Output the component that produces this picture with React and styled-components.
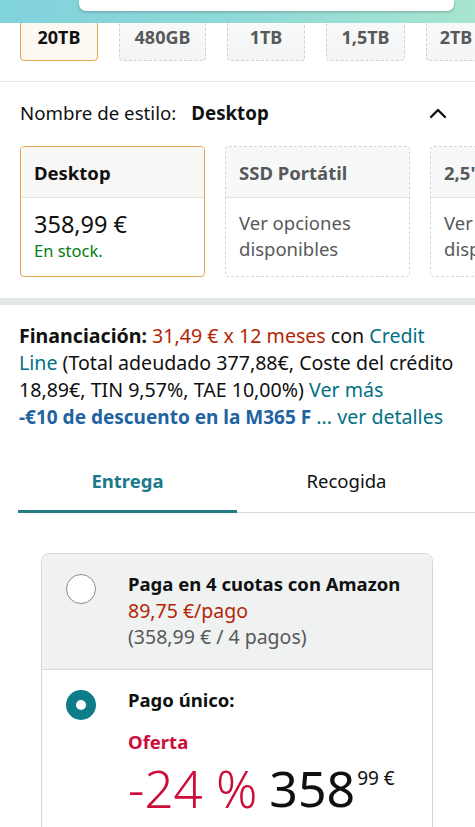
import React from "react";
import styled, { createGlobalStyle } from "styled-components";

const GlobalStyle = createGlobalStyle`
  html, body { margin: 0; padding: 0; background: #fff; }
  body {
    font-family: "Noto Sans", "Open Sans", sans-serif;
    color: #0f1111;
    width: 475px;
    overflow: hidden;
    -webkit-font-smoothing: antialiased;
  }
  * { box-sizing: border-box; }
`;

const Header = styled.header`
  position: fixed;
  top: 0;
  left: 0;
  right: 0;
  height: 23px;
  z-index: 10;
  display: flex;
  align-items: flex-start;
  padding: 0 21px 0 79px;
  background: linear-gradient(90deg, #80d2dc 0%, #8fd9d8 50%, #a7e5d0 100%);
`;

const SearchBox = styled.div`
  flex: 1;
  height: 11px;
  background: #fff;
  border-radius: 0 0 7px 7px;
  box-shadow: 0 1px 3px rgba(0, 0, 0, 0.25);
`;

const Page = styled.main`
  display: flex;
  flex-direction: column;
`;

const ChipRow = styled.div`
  display: flex;
  gap: 21px;
  padding: 13px 0 0 20px;
  overflow: hidden;
  white-space: nowrap;
`;

const Chip = styled.div`
  flex: 0 0 ${(p) => p.$w}px;
  height: 48px;
  display: flex;
  align-items: center;
  justify-content: center;
  font-size: 18px;
  font-weight: 700;
  border-radius: 4px;
  color: ${(p) => (p.$selected ? "#0f1111" : "#565959")};
  background: ${(p) =>
    p.$selected ? "#fef8f2" : "linear-gradient(180deg, #f9fafa 0%, #f3f4f5 100%)"};
  border: ${(p) => (p.$selected ? "1.5px solid #e5a556" : "1px dashed #cfd2d4")};
`;

const Divider = styled.div`
  height: 1px;
  background: #e7e9ea;
  margin-top: 20px;
`;

const StyleHeader = styled.div`
  display: flex;
  align-items: center;
  justify-content: space-between;
  padding: 19px 28px 0 20px;
  height: 42px;
  font-size: 18.7px;
  line-height: 22px;
`;

const StyleLabel = styled.div`
  color: #0f1111;
  b { font-weight: 700; margin-left: 15px; }
`;

const CardRow = styled.div`
  display: flex;
  gap: 20px;
  padding: 22px 0 0 20px;
  overflow: hidden;
`;

const StyleCard = styled.div`
  flex: 0 0 185px;
  height: 131px;
  border-radius: 4px;
  overflow: hidden;
  display: flex;
  flex-direction: column;
  border: ${(p) => (p.$selected ? "1.5px solid #e5a556" : "1px dashed #d3d5d7")};
`;

const CardTitle = styled.div`
  height: 51px;
  display: flex;
  align-items: center;
  padding-left: 13px;
  font-size: 18.5px;
  font-weight: 700;
  white-space: nowrap;
  color: ${(p) => (p.$selected ? "#0f1111" : "#565959")};
  background: ${(p) => (p.$selected ? "#f9f7f5" : "#f7f8f8")};
  border-bottom: 1px solid #e3e3e3;
`;

const CardBody = styled.div`
  flex: 1;
  padding: 12px 13px 0 13px;
  display: flex;
  flex-direction: column;
  white-space: nowrap;
`;

const CardPrice = styled.div`
  font-size: 23.5px;
  line-height: 28px;
  color: #0f1111;
`;

const Stock = styled.div`
  font-size: 16.5px;
  line-height: 26px;
  color: #067d0f;
`;

const Muted = styled.div`
  font-size: 18.5px;
  line-height: 26px;
  color: #565959;
`;

const Band = styled.div`
  height: 7px;
  background: #e3e6e6;
  margin-top: 21px;
`;

const Financing = styled.div`
  display: flex;
  flex-direction: column;
  padding: 17px 0 0 19px;
  font-size: 19.6px;
  line-height: 27px;
  color: #0f1111;
`;

const FinLine = styled.div`
  white-space: nowrap;
`;

const Bold = styled.span`
  font-weight: 700;
`;

const Price = styled.span`
  color: #b12704;
`;

const Link = styled.span`
  color: #007185;
`;

const Promo = styled.span`
  color: #2162a1;
  font-weight: 700;
  font-size: 19px;
`;

const Tabs = styled.div`
  display: flex;
  margin: 20px 0 0 18px;
  box-shadow: inset 0 -1px 0 #d5d9d9;
`;

const Tab = styled.div`
  flex: 0 0 219px;
  height: 62px;
  display: flex;
  align-items: center;
  justify-content: center;
  font-size: 18.5px;
  font-weight: ${(p) => (p.$active ? 700 : 400)};
  color: ${(p) => (p.$active ? "#1b7a8a" : "#0f1111")};
  border-bottom: 3px solid ${(p) => (p.$active ? "#237c88" : "transparent")};
`;

const PayCard = styled.div`
  margin: 40px 42px 0 41px;
  border: 1px solid #d5d9d9;
  border-radius: 8px 8px 0 0;
  overflow: hidden;
`;

const Option = styled.div`
  display: flex;
  align-items: flex-start;
  gap: 32px;
  padding: 17px 10px 18px 24px;
  background: ${(p) => (p.$grey ? "#f0f2f2" : "#fff")};
  border-bottom: ${(p) => (p.$grey ? "1px solid #d5d9d9" : "none")};
`;

const Radio = styled.div`
  flex: 0 0 30px;
  width: 30px;
  height: 30px;
  border-radius: 50%;
  margin-top: ${(p) => p.$mt}px;
  background: #fff;
  border: ${(p) => (p.$checked ? "10px solid #0f7c8a" : "1.5px solid #8a8a8a")};
`;

const OptionText = styled.div`
  display: flex;
  flex-direction: column;
  font-size: 18.5px;
  line-height: 26.5px;
  white-space: nowrap;
`;

const OptionTitle = styled.div`
  font-weight: 700;
  color: #0f1111;
`;

const Sub = styled.div`
  font-size: 19.5px;
  color: ${(p) => p.$color};
`;

const Deal = styled.div`
  margin-top: 16px;
  font-weight: 700;
  color: #cc0c39;
`;

const BigPrice = styled.div`
  display: flex;
  align-items: flex-start;
  margin-top: 2px;
  line-height: 60px;
  white-space: nowrap;
`;

const Discount = styled.span`
  font-size: 51px;
  font-weight: 300;
  color: #cc0c39;
  margin-right: 12px;
`;

const Whole = styled.span`
  font-size: 50px;
  font-weight: 400;
  color: #0f1111;
`;

const Fraction = styled.span`
  font-size: 19px;
  line-height: 18px;
  margin-top: 11px;
  margin-left: 2px;
  color: #0f1111;
`;

const Chevron = () => (
  <svg width="18" height="12" viewBox="0 0 18 12" aria-hidden="true">
    <polyline
      points="2,10 9,3 16,10"
      fill="none"
      stroke="#0f1111"
      strokeWidth="2.4"
      strokeLinecap="round"
      strokeLinejoin="round"
    />
  </svg>
);

const chips = [
  { label: "20TB", w: 78, selected: true },
  { label: "480GB", w: 87 },
  { label: "1TB", w: 78 },
  { label: "1,5TB", w: 79 },
  { label: "2TB", w: 60 },
];

export default function App() {
  return (
    <>
      <GlobalStyle />
      <Header>
        <SearchBox />
      </Header>
      <Page>
        <ChipRow>
          {chips.map((c) => (
            <Chip key={c.label} $w={c.w} $selected={c.selected}>
              {c.label}
            </Chip>
          ))}
        </ChipRow>
        <Divider />
        <StyleHeader>
          <StyleLabel>
            Nombre de estilo:<b>Desktop</b>
          </StyleLabel>
          <Chevron />
        </StyleHeader>
        <CardRow>
          <StyleCard $selected>
            <CardTitle $selected>Desktop</CardTitle>
            <CardBody>
              <CardPrice>358,99 €</CardPrice>
              <Stock>En stock.</Stock>
            </CardBody>
          </StyleCard>
          <StyleCard>
            <CardTitle>SSD Portátil</CardTitle>
            <CardBody>
              <Muted>Ver opciones</Muted>
              <Muted>disponibles</Muted>
            </CardBody>
          </StyleCard>
          <StyleCard>
            <CardTitle>2,5"</CardTitle>
            <CardBody>
              <Muted>Ver opciones</Muted>
              <Muted>disponibles</Muted>
            </CardBody>
          </StyleCard>
        </CardRow>
        <Band />
        <Financing>
          <FinLine>
            <Bold>Financiación:</Bold> <Price>31,49 € x 12 meses</Price> con{" "}
            <Link>Credit</Link>
          </FinLine>
          <FinLine>
            <Link>Line</Link> (Total adeudado 377,88€, Coste del crédito
          </FinLine>
          <FinLine>
            18,89€, TIN 9,57%, TAE 10,00%) <Link>Ver más</Link>
          </FinLine>
          <FinLine>
            <Promo>-€10 de descuento en la M365 F</Promo> <Link>... ver detalles</Link>
          </FinLine>
        </Financing>
        <Tabs>
          <Tab $active>Entrega</Tab>
          <Tab>Recogida</Tab>
        </Tabs>
        <PayCard>
          <Option $grey>
            <Radio $mt={3} />
            <OptionText>
              <OptionTitle>Paga en 4 cuotas con Amazon</OptionTitle>
              <Sub $color="#b12704">89,75 €/pago</Sub>
              <Sub $color="#565959">(358,99 € / 4 pagos)</Sub>
            </OptionText>
          </Option>
          <Option>
            <Radio $checked $mt={3} />
            <OptionText>
              <OptionTitle>Pago único:</OptionTitle>
              <Deal>Oferta</Deal>
              <BigPrice>
                <Discount>-24 %</Discount>
                <Whole>358</Whole>
                <Fraction>99 €</Fraction>
              </BigPrice>
            </OptionText>
          </Option>
        </PayCard>
      </Page>
    </>
  );
}
